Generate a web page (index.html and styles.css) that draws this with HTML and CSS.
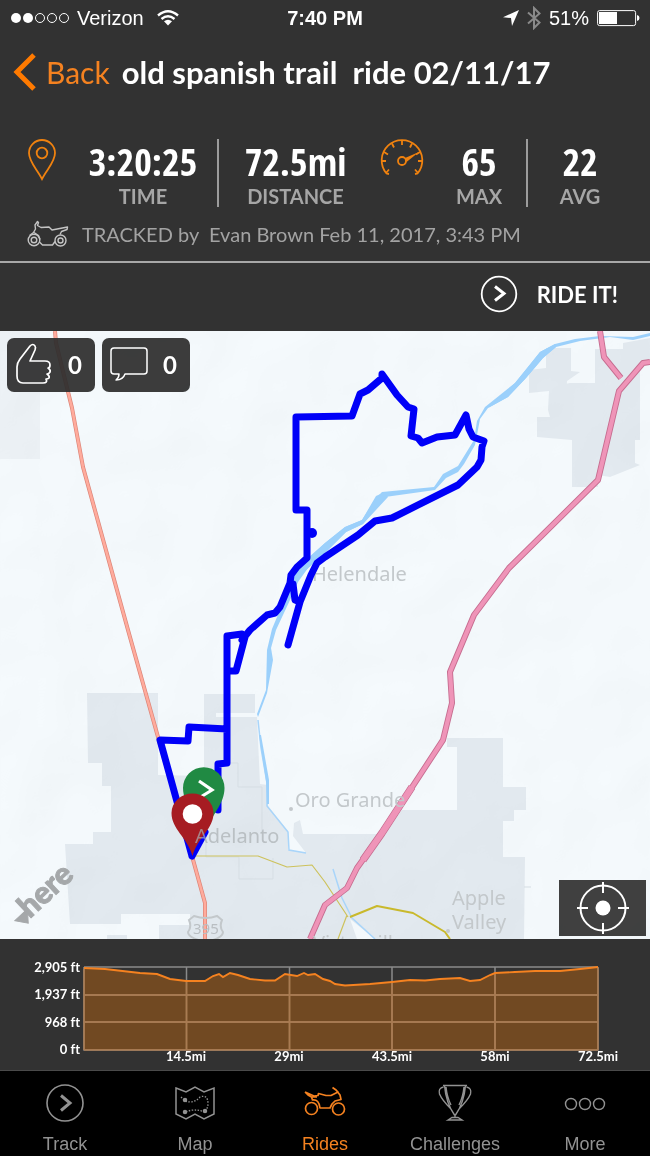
FILE: index.html
```html
<!DOCTYPE html>
<html lang="en">
<head>
    <meta charset="UTF-8">
    <meta name="viewport" content="width=device-width, initial-scale=1.0">
    <title>old spanish trail ride 02/11/17</title>
    <link rel="stylesheet" href="styles.css">
</head>
<body>

<div class="status-bar">
    <div class="status-left">
        <svg class="signal" width="60" height="12" viewBox="0 0 60 12">
            <circle cx="6" cy="6" r="5" fill="#fff"/>
            <circle cx="18" cy="6" r="5" fill="#fff"/>
            <g fill="none" stroke="#fff">
                <circle cx="30" cy="6" r="4.5"/>
                <circle cx="42" cy="6" r="4.5"/>
                <circle cx="54" cy="6" r="4.5"/>
            </g>
        </svg>
        <span>Verizon</span>
        <svg class="wifi" width="22" height="16" viewBox="0 0 22 16">
            <path d="M1 5.5Q11 -3 21 5.5M4.500 9Q11 3.500 17.500 9" fill="none" stroke="#fff" stroke-width="2.400"/>
            <path d="M7 11.300Q11 8 15 11.300L11 15.500Z" fill="#fff"/>
        </svg>
    </div>
    <div class="status-time">7:40 PM</div>
    <div class="status-right">
        <svg width="16" height="16" viewBox="0 0 16 16"><path d="M16 0L9 16L8 8L0 7.200Z" fill="#fff"/></svg>
        <svg class="bluetooth" width="14" height="24" viewBox="0 0 14 24"><path d="M1 6.500L12.500 16.500L7 22V2L12.500 7.500L1 17.500" fill="none" stroke="#8a8a8a" stroke-width="2"/></svg>
        <span>51%</span>
        <svg width="43" height="18" viewBox="0 0 43 18">
            <rect x=".6" y="1.600" width="38" height="15" rx="2" fill="none" stroke="#fff"/>
            <rect x="2" y="3" width="18" height="12" fill="#fff"/>
            <path d="M40 6Q42.500 6.500 42.500 9T40 12Z" fill="#fff"/>
        </svg>
    </div>
</div>

<header class="title-bar">
    <a href="#" class="back">
        <svg width="24" height="38" viewBox="0 0 24 38"><path d="M22 2L5 19L22 36" fill="none" stroke="#ff7a00" stroke-width="5"/></svg>
        Back
    </a>
    <h1>old spanish trail  ride 02/11/17</h1>
</header>

<section class="stats">
    <div class="stat-icon">
        <svg width="30" height="42" viewBox="0 0 30 42">
            <g fill="none" stroke="#f0820f" stroke-width="1.800">
                <path d="M15 40C10 30 2 23 2 14A13 13 0 0 1 28 14C28 23 20 30 15 40Z"/>
                <circle cx="15" cy="14" r="5.300"/>
            </g>
        </svg>
    </div>
    <div class="stat divided">
        <div class="value">3:20:25</div>
        <div class="label">TIME</div>
    </div>
    <div class="stat">
        <div class="value">72.5mi</div>
        <div class="label">DISTANCE</div>
    </div>
    <div class="stat-icon">
        <svg width="44" height="42" viewBox="0 0 44 42">
            <g fill="none" stroke="#f0820f" stroke-width="1.800">
                <path d="M9 35L6.500 34.500A20.300 20.300 0 1 1 37.500 34.500L35 35"/>
                <path d="M6 34L9 30.500M2 22H6M4 13L8 15.500M12 4.500L14 8.500M22 2V6M32 4.500L30 8.500M40 13L36 15.500M42 22H38M38 34L35 30.500"/>
                <circle cx="22" cy="22" r="4"/>
            </g>
            <path d="M25 19L39 13L26.500 23Z" fill="#f0820f"/>
        </svg>
    </div>
    <div class="stat divided">
        <div class="value">65</div>
        <div class="label">MAX</div>
    </div>
    <div class="stat">
        <div class="value">22</div>
        <div class="label">AVG</div>
    </div>
</section>

<div class="tracked">
    <svg width="42" height="28" viewBox="0 0 42 28">
        <g fill="none" stroke="#c4c4c4" stroke-width="1.400" stroke-linejoin="round">
            <circle cx="7" cy="20" r="5.800"/>
            <circle cx="7" cy="20" r="2.800"/>
            <circle cx="33.500" cy="20.500" r="5.500"/>
            <circle cx="33.500" cy="20.500" r="2.500"/>
            <path d="M12.500 22L15.500 25H25.500L28 21.500M2.500 15.500L6.500 12.500L8.500 9L8 5L10.500 1.500L11.500 2.500L10.500 5.500L14 7.500L22 7L25 10L40.500 7L40 9.500L34.500 11.500L33 14.500M7 12.500L11.500 15.500L13 19.500"/>
        </g>
    </svg>
    <span>TRACKED by  Evan Brown Feb 11, 2017, 3:43 PM</span>
</div>

<div class="ride-row">
    <button type="button" class="ride-it">
        <svg width="38" height="38" viewBox="0 0 38 38">
            <circle cx="19" cy="19" r="17.300" fill="none" stroke="#fff" stroke-width="1.800"/>
            <path d="M15 11.500L24 18.500L15 25.500" fill="none" stroke="#fff" stroke-width="3"/>
        </svg>
        RIDE IT!
    </button>
</div>

<main class="map">
    <!-- user units match the screen, the map begins 331 below the top -->
    <svg class="map-canvas" viewBox="0 331 650 608" role="img" aria-label="Route map">
        <defs>
            <filter id="relief" x="0" y="0" width="100%" height="100%">
                <feTurbulence type="fractalNoise" baseFrequency=".013" numOctaves="2" seed="8"/>
                <feDiffuseLighting surfaceScale="9" lighting-color="#ffffff">
                    <feDistantLight azimuth="225" elevation="60"/>
                </feDiffuseLighting>
            </filter>
        </defs>
        <rect x="0" y="331" width="650" height="608" fill="#f5fafd"/>

        <!-- towns -->
        <g fill="#e3eaf0">
            <path d="M0 331H40V459H0Z" fill="#edf2f6"/>
            <path d="M546 348H571V371L580 372L567 381L566 393H560V385L570 383H595V349H623V343L650 338V363L640 367V440H635V463L640 465L610 477L598 475V487H572V440L537 437V417H550L548 410L549 391L529 393V370L546 368Z"/>
            <path d="M87 693H158V775L204 776V694H255V713H216V717H257L260 784L268 785V806L288 831V850L306 853L293 836L294 823L300 820L303 834H383L402 810H457V747H447V738H503V787H526V810H514V821H503V857H525L524 939H159V925H190V914H121V924H70L65 844H93V832H111V786H102V763H88Z"/>
            <path d="M107 935H127V939H107Z"/>
        </g>
        <path d="M350 919L357 939H375Z" fill="#f5fafd"/>
        <g fill="none" stroke="#d7dfe5">
            <path d="M227 763H238V787H262V834M206 834V857H239V879H273V858M524 887H531"/>
        </g>
        <rect class="relief" x="0" y="331" width="650" height="608" filter="url(#relief)"/>

        <!-- river -->
        <path d="M650 333L633 337L600 336L575 339L555 344L540 352L528 367L515 383L500 395L485 407L477 421L474 440L458 466L443 474L434 487L382 492L376 498L362 520L345 527L325 543L300 565L292 578L285 598L272 629L267 650L266 690L257 714L258 717L267 693L273 660L271 648L276 630L290 600L298 582L308 568L325 553L346 532L363 524L385 497L435 490L446 478L458 472L464 464L475 445L477 435L480 419L488 408L508 397L526 378L543 358L556 347L580 341L610 337L633 340L650 336Z" fill="#9bd0fb"/>
        <path d="M515 383L540 352L555 344L556 347L543 358L526 378L508 397L488 408ZM376 496L385 492L388 497L363 524L346 532L325 553L305 571L300 566L325 543L345 527L362 520Z" fill="#9bd0fb"/>
        <path d="M258 720L261 748L267 783V806L288 832L289 850L306 853M333 869L342 898L352 918L375 939" fill="none" stroke="#a9d5fa" stroke-width="1.500"/>
        <path d="M259 735L261 735L269 780V804H267L266 781Z" fill="#9bd0fb"/>

        <!-- roads -->
        <g fill="none" stroke-linejoin="round">
            <path d="M192 856H258L287 867L312 865L325 882L348 917M347 915L338 939" stroke="#cdc25c" stroke-width="1.200"/>
            <path d="M350 917L377 906L413 913L445 932L450 939" stroke="#c9b92c" stroke-width="2"/>
            <path d="M55 331L56 343L72 408L83 467L128 630L158 737L192 856L205 903V939" stroke="#dc8578" stroke-width="4"/>
            <path d="M55 331L56 343L72 408L83 467L128 630L158 737L192 856L205 903V939" stroke="#ffab9c" stroke-width="2.600"/>
            <path d="M650 362L643 363L619 391L598 480L509 568L474 615L450 672L452 703L443 740L382 833L357 868L347 888L325 905L310 939M600 331L604 357L621 378" stroke="#c66d90" stroke-width="6"/>
            <path d="M412 787L382 833L363 860" stroke="#c66d90" stroke-width="7.500"/>
            <path d="M650 362L643 363L619 391L598 480L509 568L474 615L450 672L452 703L443 740L382 833L357 868L347 888L325 905L310 939M600 331L604 357L621 378" stroke="#ef94b8" stroke-width="4.200"/>
            <path d="M412 787L382 833L363 860" stroke="#ef94b8" stroke-width="6"/>
        </g>

        <g class="place">
            <text x="312" y="581">Helendale</text>
            <text x="295" y="807">Oro Grande</text>
            <text x="452" y="905">Apple</text>
            <text x="452" y="929">Valley</text>
            <text x="313" y="950">Victorville</text>
            <circle cx="291" cy="809" r="2"/>
            <circle cx="448" cy="931" r="2"/>
        </g>
        <path d="M189 920L194 916Q206 920 217 916L222 920Q219 927 223 932Q223 938 206 942Q188 938 188 932Q192 927 189 920Z" fill="none" stroke="#c3c8cb" stroke-width="2"/>
        <text class="shield" x="193" y="934">395</text>

        <!-- recorded track -->
        <path d="M192 856L160 740L188 741L189 727L227 729M218 810V764L227 763V636L242 634L245 637L236 671H229M242 640L250 630L267 615L275 613L280 607L290 583L291 575L297 567L307 558V510H296V417L352 416L360 394L368 390L382 378V374L397 395L408 407L414 409L411 436L418 438L422 443L437 437L455 435L466 415L469 429L473 437L484 441L482 447L481 460L477 467L458 485L392 518L375 521L358 535L325 557L317 563L311 575L300 602L295 600L293 584M300 602L288 645M205 832L192 856" fill="none" stroke="#0000f8" stroke-width="7" stroke-linecap="round" stroke-linejoin="round"/>
        <circle cx="312" cy="533" r="5" fill="#0000f8"/>

        <path d="M204 834C200 818 183 806 183 788A20.500 20.500 0 0 1 224.500 788C224.500 804 212 814 204 834Z" fill="#208a43"/>
        <path d="M199 781L212 790L199 798" fill="none" stroke="#fff" stroke-width="3.200"/>
        <path d="M192.500 856C187 837 171.500 829 171.500 813A21 19.500 0 0 1 213.500 813C213.500 829 198 837 192.500 856Z" fill="#a61c22"/>
        <circle cx="192.500" cy="814" r="9.800" fill="#fff"/>
        <text class="place over" x="195" y="843">Adelanto</text>

        <g transform="translate(32 917) rotate(-43)" class="brand">
            <path d="M-15 -9H2L-7 2Z"/>
            <text x="-3" y="0">here</text>
        </g>
    </svg>

    <div class="map-actions">
        <button type="button" aria-label="Likes">
            <svg width="38" height="42" viewBox="0 0 38 42"><path d="M8 40Q2 40 2 33V24Q2 20 5 16L15 3Q18 0 20 3Q21 4 20 7L15 18H30Q35 18 35 22Q35 25 33 25Q36 27 35 29Q34 31 32 31Q35 33 34 35Q33 36 31 36Q33 40 28 40Z" fill="none" stroke="#fff" stroke-width="1.700" stroke-linejoin="round"/></svg>
            0
        </button>
        <button type="button" aria-label="Comments">
            <svg width="38" height="36" viewBox="0 0 38 36"><path d="M4 2H34Q37 2 37 5V25Q37 28 34 28H15Q13 34 6 34Q9 32 9 28H4Q1 28 1 25V5Q1 2 4 2Z" fill="none" stroke="#fff" stroke-width="1.500" stroke-linejoin="round"/></svg>
            0
        </button>
    </div>
    <button type="button" class="locate" aria-label="My location">
        <svg width="52" height="52" viewBox="0 0 52 52">
            <circle cx="26" cy="26" r="22.500" fill="none" stroke="#fff" stroke-width="2"/>
            <path d="M26 0V11M26 41V52M0 26H11M41 26H52" stroke="#fff" stroke-width="2"/>
            <circle cx="26" cy="26" r="7.500" fill="#fff"/>
        </svg>
    </button>
</main>

<section class="elevation">
    <svg viewBox="0 0 650 131" role="img" aria-label="Elevation profile">
        <path d="M84 28V111H598V28M84 28H598M84 56H598M84 83H598M186.500 28V111M289.500 28V111M392 28V111M495 28V111" fill="none" stroke="#8a8a8a" stroke-width="1.500"/>
        <path d="M84 29L105 30L140 34L157 35L170 40L186 42H205L213 37L219 35L223 38L230 34L238 36L250 40L265 41.500H275L285 35L297 37L304 34L308 36L315 35L323 40L330 42L335 45L345 46.500L370 45L392 43L410 41L425 41.500L440 40L460 39L470 42L480 41L490 36L495 34L515 33L535 32L560 32L580 30L598 28V111H84Z" fill="#ff7f00" fill-opacity=".31"/>
        <path d="M84 56H598M84 83H598M84 111V30M186.500 42V111M289.500 36V111M392 43V111M495 35V111M598 29V111M84 111H598" fill="none" stroke="#a97b52" stroke-width="1.500"/>
        <path d="M84 29L105 30L140 34L157 35L170 40L186 42H205L213 37L219 35L223 38L230 34L238 36L250 40L265 41.500H275L285 35L297 37L304 34L308 36L315 35L323 40L330 42L335 45L345 46.500L370 45L392 43L410 41L425 41.500L440 40L460 39L470 42L480 41L490 36L495 34L515 33L535 32L560 32L580 30L598 28" fill="none" stroke="#f58220" stroke-width="1.900"/>
        <g class="axis-y">
            <text x="80" y="33">2,905 ft</text>
            <text x="80" y="60">1,937 ft</text>
            <text x="80" y="88">968 ft</text>
            <text x="80" y="115">0 ft</text>
        </g>
        <g class="axis-x">
            <text x="186" y="122">14.5mi</text>
            <text x="289" y="122">29mi</text>
            <text x="392" y="122">43.5mi</text>
            <text x="495" y="122">58mi</text>
            <text x="598" y="122">72.5mi</text>
        </g>
    </svg>
</section>

<nav class="tabs">
    <a href="#">
        <svg width="42" height="40" viewBox="0 0 42 40" fill="none" stroke="#929292">
            <circle cx="21" cy="20" r="18" stroke-width="1.600"/>
            <path d="M17 12.500L26 20L17 27.500" stroke-width="3"/>
        </svg>
        Track
    </a>
    <a href="#">
        <svg width="42" height="40" viewBox="0 0 42 40" fill="none" stroke="#929292" stroke-width="1.500">
            <path d="M2 5L12 9L21 4L30 9L40 5V31L30 36L21 31L12 36L2 31Z"/>
            <path d="M7 14L11 18Q20 21 26 14Q34 11 34 21Q34 25 31 28M12 29Q20 25 31 29" stroke-dasharray="1.500 1.500" stroke-width="1.300"/>
            <circle cx="11" cy="17" r="1.500" fill="#929292"/>
            <circle cx="11" cy="29" r="1.500" fill="#929292"/>
            <circle cx="31" cy="28" r="1.500" fill="#929292"/>
        </svg>
        Map
    </a>
    <a href="#" class="active">
        <svg width="42" height="40" viewBox="0 0 42 40" fill="none" stroke="#f58220" stroke-width="1.700" stroke-linejoin="round">
            <circle cx="7.500" cy="25.500" r="6"/>
            <circle cx="34.500" cy="26" r="6"/>
            <path d="M1 9L10 13L14 12.500L14.500 10.500L22 12.500H27L34 9L32 7L28.500 4.500M32 7L36 12L37 16.500L31 18L28 21L26 25H16Q15 16 8.500 17L7.500 14L4 12L1 9M7.500 14H13"/>
        </svg>
        Rides
    </a>
    <a href="#">
        <svg width="42" height="40" viewBox="0 0 42 40" fill="none" stroke="#929292" stroke-width="1.400">
            <path d="M9 2.500H33M10.500 2.500Q12 20 20.500 32M31.500 2.500Q30 20 21.500 32M9.500 4Q4 5 5.500 11Q8 17 17 26M32.500 4Q38 5 36.500 11Q34 17 25 26M12 4Q13 14 17 22M30 4Q29 14 25 22M21 31V35M14 37L18 34.500H24L28 37Z"/>
        </svg>
        Challenges
    </a>
    <a href="#">
        <svg width="42" height="40" viewBox="0 0 42 40" fill="none" stroke="#929292" stroke-width="1.400">
            <circle cx="7" cy="21" r="5.500"/>
            <circle cx="21" cy="21" r="5.500"/>
            <circle cx="35" cy="21" r="5.500"/>
        </svg>
        More
    </a>
</nav>

</body>
</html>
```
FILE: styles.css
```css
* {
    box-sizing: border-box;
}
body {
    margin: 0;
    background-color: #323232;
    color: #fff;
    font-family: Lato, "Open Sans", sans-serif;
    font-variant-ligatures: none;
}
svg {
    display: block;
    flex: none;
}
button {
    border: none;
    color: #fff;
    font-family: inherit;
    cursor: pointer;
}
a {
    text-decoration: none;
}

/* status bar */
.status-bar {
    display: grid;
    grid-template-columns: 1fr auto 1fr;
    align-items: center;
    height: 36px;
    padding: 0 10px;
    font-family: "Liberation Sans", Arial, sans-serif;
    font-size: 20px;
}
.status-left,
.status-right {
    display: flex;
    align-items: center;
    gap: 8px;
}
.status-left {
    gap: 7px;
}
.wifi {
    margin-left: 6px;
}
.status-right {
    justify-content: flex-end;
}
.status-time {
    font-weight: bold;
}

/* title */
.title-bar {
    display: flex;
    align-items: center;
    gap: 12px;
    height: 72px;
    padding: 0 12px;
}
.back {
    display: flex;
    align-items: center;
    gap: 10px;
    color: #f58220;
    font-size: 30px;
}
h1 {
    margin: 0;
    font-size: 31px;
    font-weight: bold;
    white-space: pre;
}

/* stats */
.stats {
    display: grid;
    grid-template-columns: 55fr 150fr 153fr 60fr 96fr 104fr;
    padding: 31px 18px 0 14px;
}
.stat-icon {
    display: flex;
    justify-content: center;
}
.stat {
    height: 68px;
    text-align: center;
}
.divided {
    border-right: 2px solid #9c9c9c;
}
.value {
    font-family: "Liberation Sans Narrow", "Open Sans Condensed", "Roboto Condensed", "Liberation Sans", sans-serif;
    font-size: 38px;
    font-weight: bold;
    line-height: 44px;
}
.label {
    color: #a6a6a6;
    font-size: 20px;
    font-weight: bold;
    line-height: 26px;
}
.tracked {
    display: flex;
    align-items: center;
    gap: 13px;
    height: 56px;
    padding: 0 27px;
    border-bottom: 2px solid #a8a8a8;
    color: #a3a3a3;
    font-size: 20px;
    white-space: pre;
}
.ride-row {
    display: flex;
    justify-content: flex-end;
    align-items: center;
    height: 68px;
    padding: 0 32px 6px 0;
}
.ride-it {
    display: flex;
    align-items: center;
    gap: 19px;
    padding: 0;
    background: none;
    font-size: 22px;
    font-weight: bold;
}

/* map */
.map {
    position: relative;
}
.map-canvas {
    width: 100%;
    height: auto;
}
.relief {
    opacity: .12;
    mix-blend-mode: multiply;
}
.place {
    fill: #c3c8cb;
    font-family: "Noto Sans", sans-serif;
    font-size: 20px;
}
.over {
    fill: #a9afb2;
    fill-opacity: .7;
}
.shield {
    fill: #b9bec2;
    font-family: "Noto Sans", sans-serif;
    font-size: 15px;
}
.brand {
    fill: #a5a8aa;
    stroke: #a5a8aa;
    font-family: Lato, sans-serif;
    font-size: 31px;
    font-weight: 900;
}
.map-actions {
    position: absolute;
    top: 7px;
    left: 7px;
    display: flex;
    gap: 7px;
}
.map-actions button {
    display: flex;
    align-items: center;
    justify-content: space-between;
    width: 88px;
    height: 54px;
    padding: 0 13px 2px 8px;
    border-radius: 7px;
    background-color: rgba(45, 45, 45, .93);
    font-size: 24px;
    font-weight: bold;
}
.locate {
    position: absolute;
    right: 4px;
    bottom: 3px;
    display: flex;
    align-items: center;
    justify-content: center;
    width: 87px;
    height: 56px;
    padding: 0;
    background-color: rgba(50, 50, 50, .93);
}

/* elevation */
.elevation svg {
    width: 100%;
    height: auto;
}
.elevation text {
    fill: #fff;
    font-size: 13px;
    font-weight: bold;
}
.axis-y {
    text-anchor: end;
}
.axis-x {
    text-anchor: middle;
}

/* tab bar */
.tabs {
    display: grid;
    grid-template-columns: repeat(5, 1fr);
    height: 86px;
    padding-top: 12px;
    border-top: 1px solid #4a4a4a;
    background-color: #000;
}
.tabs a {
    display: flex;
    flex-direction: column;
    align-items: center;
    gap: 11px;
    color: #929292;
    font-family: "Liberation Sans", Arial, sans-serif;
    font-size: 18px;
}
.tabs .active {
    color: #f58220;
}
```
